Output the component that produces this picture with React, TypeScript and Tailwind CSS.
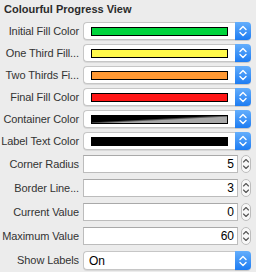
import React from 'react';

const font = { fontFamily: '"Liberation Sans", Arial, sans-serif' };

function UpDown() {
  return (
    <svg width="16" height="18" viewBox="0 0 16 18" fill="none">
      <path d="M5 7.5 L8 4.5 L11 7.5" stroke="white" strokeWidth="1.4" strokeLinecap="round" strokeLinejoin="round" />
      <path d="M5 10.5 L8 13.5 L11 10.5" stroke="white" strokeWidth="1.4" strokeLinecap="round" strokeLinejoin="round" />
    </svg>
  );
}

function BlueButton() {
  return (
    <div className="flex h-full w-[16px] items-center justify-center rounded-r-[4px] bg-[linear-gradient(to_bottom,#64aefc,#1d7cf2)] shadow-[0_1px_0_rgba(0,0,0,0.15)]">
      <UpDown />
    </div>
  );
}

function Stepper() {
  return (
    <div className="flex h-[18px] w-[10px] flex-col items-center justify-center rounded-[5px] border border-[#bdbdbd] bg-[#f8f8f8]">
      <svg width="8" height="14" viewBox="0 0 8 14" fill="none">
        <path d="M1.5 5 L4 2.5 L6.5 5" stroke="#555" strokeWidth="1.1" strokeLinecap="round" strokeLinejoin="round" />
        <path d="M1.5 9 L4 11.5 L6.5 9" stroke="#555" strokeWidth="1.1" strokeLinecap="round" strokeLinejoin="round" />
      </svg>
    </div>
  );
}

function Label({ text }: { text: string }) {
  return (
    <div className="flex w-[79px] shrink-0 justify-end whitespace-nowrap text-[11px] tracking-[-0.1px] text-[#333]">
      {text}
    </div>
  );
}

const wells = [
  { label: 'Initial Fill Color', swatch: 'bg-[#00d43c]' },
  { label: 'One Third Fill...', swatch: 'bg-[#fff94a]' },
  { label: 'Two Thirds Fi...', swatch: 'bg-[#ff9833]' },
  { label: 'Final Fill Color', swatch: 'bg-[#ff1616]' },
  { label: 'Container Color', swatch: 'bg-[linear-gradient(to_top_left,#a8a8a8_42%,#000_58%)]' },
  { label: 'Label Text Color', swatch: 'bg-black' },
];

const numbers = [
  { label: 'Corner Radius', value: '5' },
  { label: 'Border Line...', value: '3' },
  { label: 'Current Value', value: '0' },
  { label: 'Maximum Value', value: '60' },
];

export default function App() {
  return (
    <div className="h-[272px] w-[256px] overflow-hidden bg-[#ececec] text-[#333]" style={font}>
      <div className="flex h-[18px] items-center pl-1 text-[11px] font-bold text-[#2b2b2b]">Colourful Progress View</div>

      <div className="mt-[4px] flex flex-col gap-[4px]">
        {wells.map((w) => (
          <div key={w.label} className="flex h-[18px] items-center gap-[4px]">
            <Label text={w.label} />
            <div className="flex h-[18px] w-[168px]">
              <div className="flex h-full flex-1 items-center rounded-l-[4px] border border-r-0 border-[#c6c6c6] bg-white px-[7px] shadow-[0_1px_0_rgba(0,0,0,0.08)]">
                <div className={`h-[9px] w-full border-[1.5px] border-black ${w.swatch}`} />
              </div>
              <BlueButton />
            </div>
          </div>
        ))}
      </div>

      <div className="mt-[5px] flex flex-col gap-[6px]">
        {numbers.map((n) => (
          <div key={n.label} className="flex h-[18px] items-center gap-[4px]">
            <Label text={n.label} />
            <div className="flex h-[18px] w-[155px] items-center justify-end border border-[#bcbcbc] border-t-[#a9a9a9] bg-white pr-[3px] text-[12px] text-black">
              {n.value}
            </div>
            <div className="ml-[-1px]">
              <Stepper />
            </div>
          </div>
        ))}
      </div>

      <div className="mt-[6px] flex h-[19px] items-center gap-[4px]">
        <Label text="Show Labels" />
        <div className="flex h-[19px] w-[168px]">
          <div className="flex h-full flex-1 items-center rounded-l-[4px] border border-r-0 border-[#c6c6c6] bg-white pl-[5px] text-[12px] text-black shadow-[0_1px_0_rgba(0,0,0,0.08)]">
            On
          </div>
          <BlueButton />
        </div>
      </div>
    </div>
  );
}
